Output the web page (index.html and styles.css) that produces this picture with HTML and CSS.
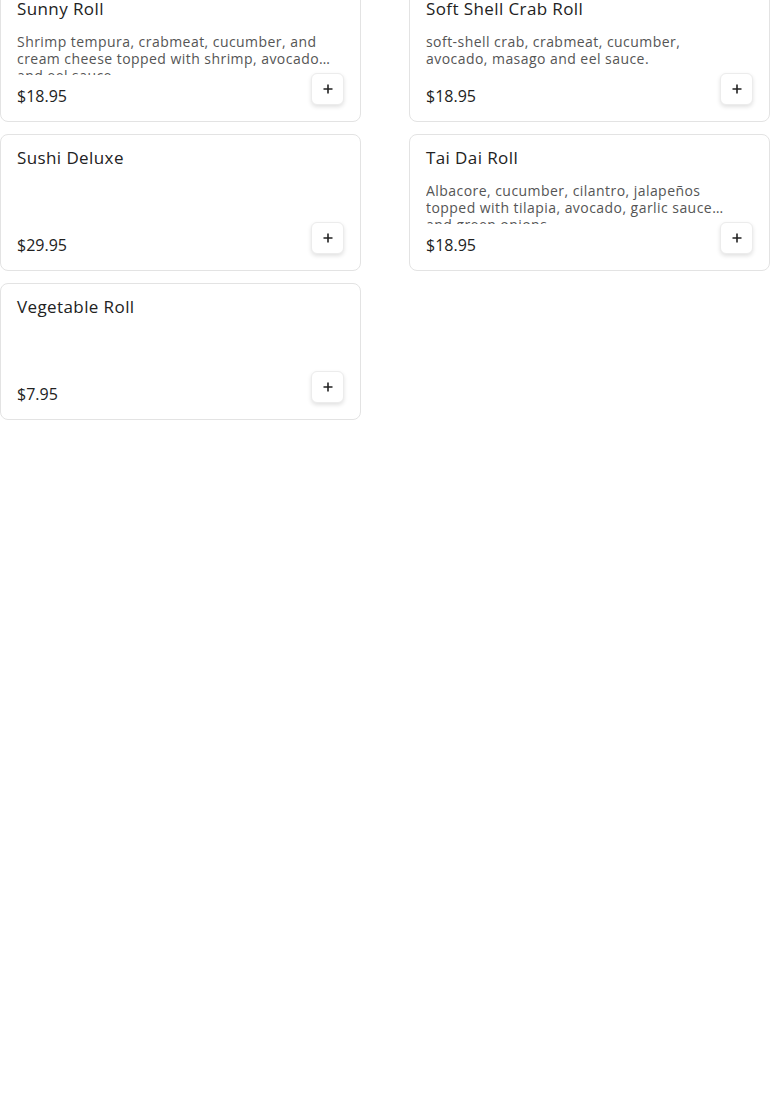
FILE: index.html
```html
<!DOCTYPE html>
<html>
<head>
<meta charset="utf-8">
<link rel="stylesheet" href="styles.css">
</head>
<body>
<div class="menu-grid">
  <div class="card">
    <div class="title">Sunny Roll</div>
    <div class="desc">Shrimp tempura, crabmeat, cucumber, and cream cheese topped with shrimp, avocado and eel sauce.</div>
    <div class="footer"><span class="price">$18.95</span><button class="add"><svg width="12" height="12" viewBox="0 0 12 12"><path d="M6 1.5v9M1.5 6h9" stroke="#222" stroke-width="1.6" fill="none"/></svg></button></div>
  </div>
  <div class="card">
    <div class="title">Soft Shell Crab Roll</div>
    <div class="desc">soft-shell crab, crabmeat, cucumber, avocado, masago and eel sauce.</div>
    <div class="footer"><span class="price">$18.95</span><button class="add"><svg width="12" height="12" viewBox="0 0 12 12"><path d="M6 1.5v9M1.5 6h9" stroke="#222" stroke-width="1.6" fill="none"/></svg></button></div>
  </div>
  <div class="card">
    <div class="title">Sushi Deluxe</div>
    <div class="desc"></div>
    <div class="footer"><span class="price">$29.95</span><button class="add"><svg width="12" height="12" viewBox="0 0 12 12"><path d="M6 1.5v9M1.5 6h9" stroke="#222" stroke-width="1.6" fill="none"/></svg></button></div>
  </div>
  <div class="card">
    <div class="title">Tai Dai Roll</div>
    <div class="desc">Albacore, cucumber, cilantro, jalapeños topped with tilapia, avocado, garlic sauce and green onions.</div>
    <div class="footer"><span class="price">$18.95</span><button class="add"><svg width="12" height="12" viewBox="0 0 12 12"><path d="M6 1.5v9M1.5 6h9" stroke="#222" stroke-width="1.6" fill="none"/></svg></button></div>
  </div>
  <div class="card">
    <div class="title">Vegetable Roll</div>
    <div class="desc"></div>
    <div class="footer"><span class="price">$7.95</span><button class="add"><svg width="12" height="12" viewBox="0 0 12 12"><path d="M6 1.5v9M1.5 6h9" stroke="#222" stroke-width="1.6" fill="none"/></svg></button></div>
  </div>
</div>
</body>
</html>
```
FILE: styles.css
```css
html, body {
  margin: 0;
  padding: 0;
  background: #fff;
}
body {
  font-family: "Open Sans", "Liberation Sans", sans-serif;
  color: #222;
  overflow: hidden;
}
.menu-grid {
  display: grid;
  grid-template-columns: 361px 361px;
  column-gap: 48px;
  row-gap: 12px;
  margin-top: -15px;
}
.card {
  box-sizing: border-box;
  height: 137px;
  border: 1px solid #e3e3e3;
  border-radius: 8px;
  padding: 12px 16px 15px 16px;
  display: flex;
  flex-direction: column;
}
.title {
  font-size: 17px;
  line-height: 21px;
  letter-spacing: 0.4px;
  color: #222;
  flex-shrink: 0;
}
.desc {
  margin-top: 14px;
  margin-bottom: -9px;
  flex-shrink: 0;
  font-size: 14px;
  line-height: 17px;
  letter-spacing: 0.45px;
  color: #555;
  height: 42px;
  width: 316px;
  overflow: hidden;
  display: -webkit-box;
  -webkit-box-orient: vertical;
  -webkit-line-clamp: 2;
}
.footer {
  margin-top: auto;
  display: flex;
  justify-content: space-between;
  align-items: flex-end;
}
.price {
  font-size: 16px;
  line-height: 20px;
  color: #222;
}
.add {
  width: 33px;
  height: 32px;
  margin-bottom: 1px;
  padding: 0;
  border: 1px solid #ececec;
  border-radius: 6px;
  background: #fff;
  box-shadow: 0 2px 4px rgba(0,0,0,0.12);
  display: flex;
  align-items: center;
  justify-content: center;
}
.add svg { display: block; }
```
